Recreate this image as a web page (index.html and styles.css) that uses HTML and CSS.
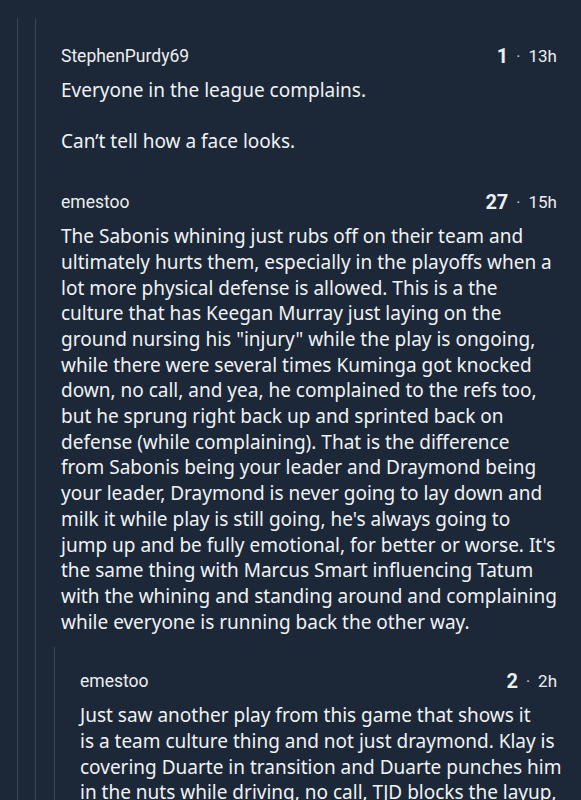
FILE: index.html
```html
<!DOCTYPE html>
<html>
<head>
<meta charset="utf-8">
<link rel="stylesheet" href="styles.css">
</head>
<body>
<div class="rail rail-outer">
  <div class="rail rail-inner">
    <div class="comment">
      <div class="head">
        <span class="user">StephenPurdy69</span>
        <span class="meta"><b class="score">1</b><span class="dot">·</span><span class="age">13h</span></span>
      </div>
      <div class="body">
        <p>Everyone in the league complains.</p>
        <p>Can’t tell how a face looks.</p>
      </div>
    </div>
    <div class="comment">
      <div class="head">
        <span class="user">emestoo</span>
        <span class="meta"><b class="score">27</b><span class="dot">·</span><span class="age">15h</span></span>
      </div>
      <div class="body">
        <p>The Sabonis whining just rubs off on their team and ultimately hurts them, especially in the playoffs when a lot more physical defense is allowed. This is a the culture that has Keegan Murray just laying on the ground nursing his "injury" while the play is ongoing, while there were several times Kuminga got knocked down, no call, and yea, he complained to the refs too, but he sprung right back up and sprinted back on defense (while complaining). That is the difference from Sabonis being your leader and Draymond being your leader, Draymond is never going to lay down and milk it while play is still going, he's always going to jump up and be fully emotional, for better or worse. It's the same thing with Marcus Smart influencing Tatum with the whining and standing around and complaining while everyone is running back the other way.</p>
      </div>
      <div class="rail rail-reply">
        <div class="comment reply">
          <div class="head">
            <span class="user">emestoo</span>
            <span class="meta"><b class="score">2</b><span class="dot">·</span><span class="age">2h</span></span>
          </div>
          <div class="body">
            <p>Just saw another play from this game that shows it<br>is a team culture thing and not just draymond. Klay is covering Duarte in transition and Duarte punches him in the nuts while driving, no call, TJD blocks the layup, and then Klay goes down on the floor.</p>
          </div>
        </div>
      </div>
    </div>
  </div>
</div>
</body>
</html>
```
FILE: styles.css
```css
html, body {
  margin: 0;
  padding: 0;
  background: #1c2838;
  height: 800px;
  overflow: hidden;
}
body {
  color: #f0f2f4;
  font-family: "Noto Sans", "Open Sans", sans-serif;
  padding-top: 18px;
}
.rail {
  border-left: 1px solid #34465e;
}
.rail-outer {
  margin-left: 17px;
}
.rail-inner {
  margin-left: 17px;
  padding-left: 25px;
  padding-right: 24px;
}
.rail-reply {
  margin-left: -7px;
  margin-right: -24px;
  margin-top: 12px;
  padding-left: 25px;
  padding-right: 24px;
}
.comment {
  padding-top: 23px;
  padding-bottom: 9px;
}
.comment.reply {
  padding-top: 19px;
}
.head {
  height: 30px;
  display: flex;
  align-items: center;
  justify-content: space-between;
  margin-bottom: 7px;
}
.user {
  font-family: Roboto, "Noto Sans", sans-serif;
  font-size: 17.5px;
  color: #eceef0;
}
.meta {
  display: flex;
  align-items: center;
  font-family: Roboto, sans-serif;
  color: #eceef0;
}
.score {
  font-size: 20px;
  font-weight: 700;
}
.dot {
  font-size: 16px;
  margin: 0 8px;
  color: #c9ced4;
}
.age {
  font-size: 17px;
}
.body {
  font-size: 19px;
  line-height: 25.7px;
}
.reply .body {
  margin-right: -6px;
}
.body p {
  margin: 0;
}
.body p + p {
  margin-top: 25.7px;
}
```
